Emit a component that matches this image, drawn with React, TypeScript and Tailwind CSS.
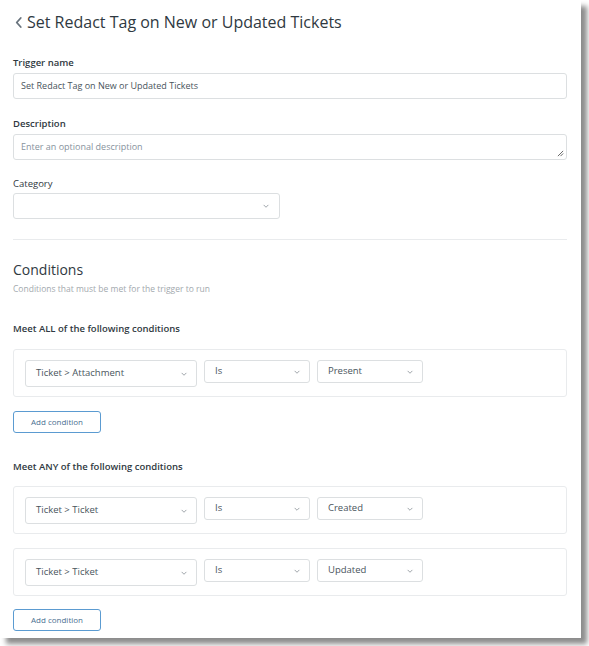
import { FC } from "react";

const Chevron: FC<{ className?: string }> = ({ className }) => (
  <svg viewBox="0 0 12 12" className={className} fill="none" stroke="#a0a6ab" strokeWidth={1.2}>
    <path d="M3.5 5l2.5 2.5 2.5-2.5" strokeLinecap="round" strokeLinejoin="round" />
  </svg>
);

interface SelectProps {
  value: string;
  width: string;
  tall?: boolean;
}

const Select: FC<SelectProps> = ({ value, width, tall }) => (
  <div
    className={`flex ${width} ${tall ? "h-[27px]" : "h-[23px]"} items-center justify-between rounded-[3px] border border-[#dcdfe1] bg-white pl-[10px] pr-[7px]`}
  >
    <span className="text-[9.5px] text-[#49545c]">{value}</span>
    <Chevron className="h-[10px] w-[10px]" />
  </div>
);

const ConditionRow: FC<{ field: string; op: string; value: string }> = ({ field, op, value }) => (
  <div className="flex h-[48px] w-[554px] items-start gap-[7px] rounded-[3px] border border-[#e9ebed] pl-[11px] pt-[10px]">
    <Select value={field} width="w-[172px]" tall />
    <Select value={op} width="w-[106px]" />
    <Select value={value} width="w-[106px]" />
  </div>
);

const AddButton: FC<{ className?: string }> = ({ className }) => (
  <button
    className={`flex h-[22px] w-[88px] items-center justify-center rounded-[3px] border border-[#5b9bd1] bg-white text-[8px] text-[#4a6f91] ${className ?? ""}`}
  >
    Add condition
  </button>
);

const App: FC = () => {
  return (
    <div className="h-[646px] w-[589px] bg-white" style={{ fontFamily: '"Open Sans", "Noto Sans", sans-serif' }}>
      <div className="flex h-[638px] w-[581px] flex-col bg-white pl-[13px] text-[#2f3941] shadow-[6px_6px_5px_rgba(0,0,0,0.45)]">
        <div className="mt-[10px] flex h-[24px] items-center">
          <svg viewBox="0 0 10 14" className="ml-[1px] h-[13px] w-[9px]" fill="none" stroke="#68737d" strokeWidth={2}>
            <path d="M7.5 2L3 7l4.5 5" strokeLinecap="round" strokeLinejoin="round" />
          </svg>
          <h1 className="ml-[4px] text-[16px] leading-[24px] text-[#2f3941]">Set Redact Tag on New or Updated Tickets</h1>
        </div>

        <label className="mt-[22px] h-[14px] text-[9.5px] font-semibold leading-[14px]">Trigger name</label>
        <div className="mt-[3px] flex h-[26px] w-[554px] items-center rounded-[3px] border border-[#dcdfe1] px-[7px] text-[9px] text-[#49545c]">
          Set Redact Tag on New or Updated Tickets
        </div>

        <label className="mt-[18px] h-[14px] text-[9.5px] font-semibold leading-[14px]">Description</label>
        <div className="relative mt-[3px] flex h-[26px] w-[554px] items-center rounded-[3px] border border-[#dcdfe1] px-[7px] text-[9px] text-[#87929d]">
          Enter an optional description
          <svg viewBox="0 0 8 8" className="absolute bottom-[2px] right-[2px] h-[7px] w-[7px]" stroke="#555" strokeWidth={1}>
            <path d="M1 7L7 1M4 7l3-3" />
          </svg>
        </div>

        <label className="mt-[17px] h-[14px] text-[9.5px] font-medium leading-[14px]">Category</label>
        <div className="mt-[2px] flex h-[26px] w-[267px] items-center justify-end rounded-[3px] border border-[#dcdfe1] pr-[8px]">
          <Chevron className="h-[10px] w-[10px]" />
        </div>

        <div className="mt-[20px] h-px w-[554px] bg-[#e9ebed]" />

        <h2 className="mt-[21px] h-[18px] text-[14px] leading-[18px]">Conditions</h2>
        <p className="mt-[4px] h-[12px] text-[8.5px] leading-[12px] text-[#a3a9ae]">Conditions that must be met for the trigger to run</p>

        <h3 className="mt-[27px] h-[14px] text-[9.5px] font-semibold leading-[14px]">Meet ALL of the following conditions</h3>
        <div className="mt-[13px]">
          <ConditionRow field="Ticket > Attachment" op="Is" value="Present" />
        </div>
        <AddButton className="mt-[14px]" />

        <h3 className="mt-[27px] h-[14px] text-[9.5px] font-semibold leading-[14px]">Meet ANY of the following conditions</h3>
        <div className="mt-[12px] flex flex-col gap-[14px]">
          <ConditionRow field="Ticket > Ticket" op="Is" value="Created" />
          <ConditionRow field="Ticket > Ticket" op="Is" value="Updated" />
        </div>
        <AddButton className="mt-[13px]" />
      </div>
    </div>
  );
};

export default App;
